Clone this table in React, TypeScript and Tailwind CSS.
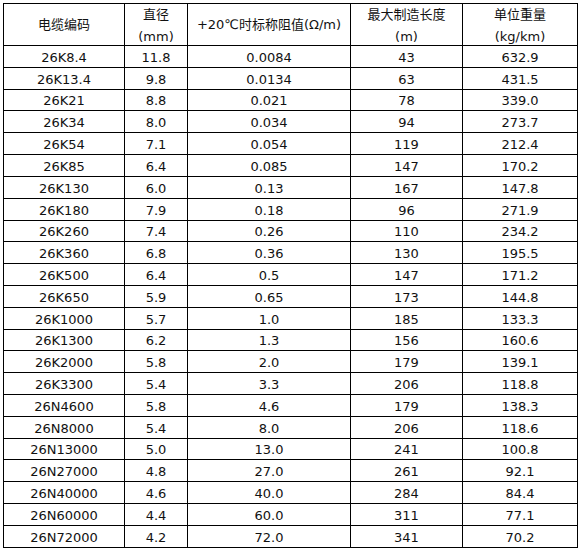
const rows: [string, string, string, string, string][] = [
  ['26K8.4', '11.8', '0.0084', '43', '632.9'],
  ['26K13.4', '9.8', '0.0134', '63', '431.5'],
  ['26K21', '8.8', '0.021', '78', '339.0'],
  ['26K34', '8.0', '0.034', '94', '273.7'],
  ['26K54', '7.1', '0.054', '119', '212.4'],
  ['26K85', '6.4', '0.085', '147', '170.2'],
  ['26K130', '6.0', '0.13', '167', '147.8'],
  ['26K180', '7.9', '0.18', '96', '271.9'],
  ['26K260', '7.4', '0.26', '110', '234.2'],
  ['26K360', '6.8', '0.36', '130', '195.5'],
  ['26K500', '6.4', '0.5', '147', '171.2'],
  ['26K650', '5.9', '0.65', '173', '144.8'],
  ['26K1000', '5.7', '1.0', '185', '133.3'],
  ['26K1300', '6.2', '1.3', '156', '160.6'],
  ['26K2000', '5.8', '2.0', '179', '139.1'],
  ['26K3300', '5.4', '3.3', '206', '118.8'],
  ['26N4600', '5.8', '4.6', '179', '138.3'],
  ['26N8000', '5.4', '8.0', '206', '118.6'],
  ['26N13000', '5.0', '13.0', '241', '100.8'],
  ['26N27000', '4.8', '27.0', '261', '92.1'],
  ['26N40000', '4.6', '40.0', '284', '84.4'],
  ['26N60000', '4.4', '60.0', '311', '77.1'],
  ['26N72000', '4.2', '72.0', '341', '70.2'],
];

// the source image was scaled, so a few rows are one pixel shorter
const shortRows = new Set([2, 8, 13, 18]);

const cell = 'flex items-center justify-center border-r border-b border-black';

export default function App() {
  return (
    <div className="min-h-[552px] bg-white pl-[3px] pt-[3px] font-['DejaVu_Sans','Noto_Sans_CJK_SC',sans-serif] text-[13px] text-[#111]">
      <div className="grid w-[575px] grid-cols-[121px_63px_163px_112px_115px] border-l border-t border-black">
        <div className={`${cell} h-[42px]`}>电缆编码</div>
        <div className="flex h-[42px] flex-col items-center border-r border-b border-black leading-[22px]">
          <span>直径</span>
          <span>(mm)</span>
        </div>
        <div className={`${cell} h-[42px]`}>+20℃时标称阻值(Ω/m)</div>
        <div className="flex h-[42px] flex-col items-center border-r border-b border-black leading-[22px]">
          <span>最大制造长度</span>
          <span>(m)</span>
        </div>
        <div className="flex h-[42px] flex-col items-center border-r border-b border-black leading-[22px]">
          <span>单位重量</span>
          <span>(kg/km)</span>
        </div>

        {rows.map((row, i) =>
          row.map((value, j) => (
            <div
              key={`${i}-${j}`}
              className={`${cell} pt-[2px] ${shortRows.has(i) ? 'h-[21px]' : 'h-[22px]'}`}
            >
              {value}
            </div>
          ))
        )}
      </div>
    </div>
  );
}
